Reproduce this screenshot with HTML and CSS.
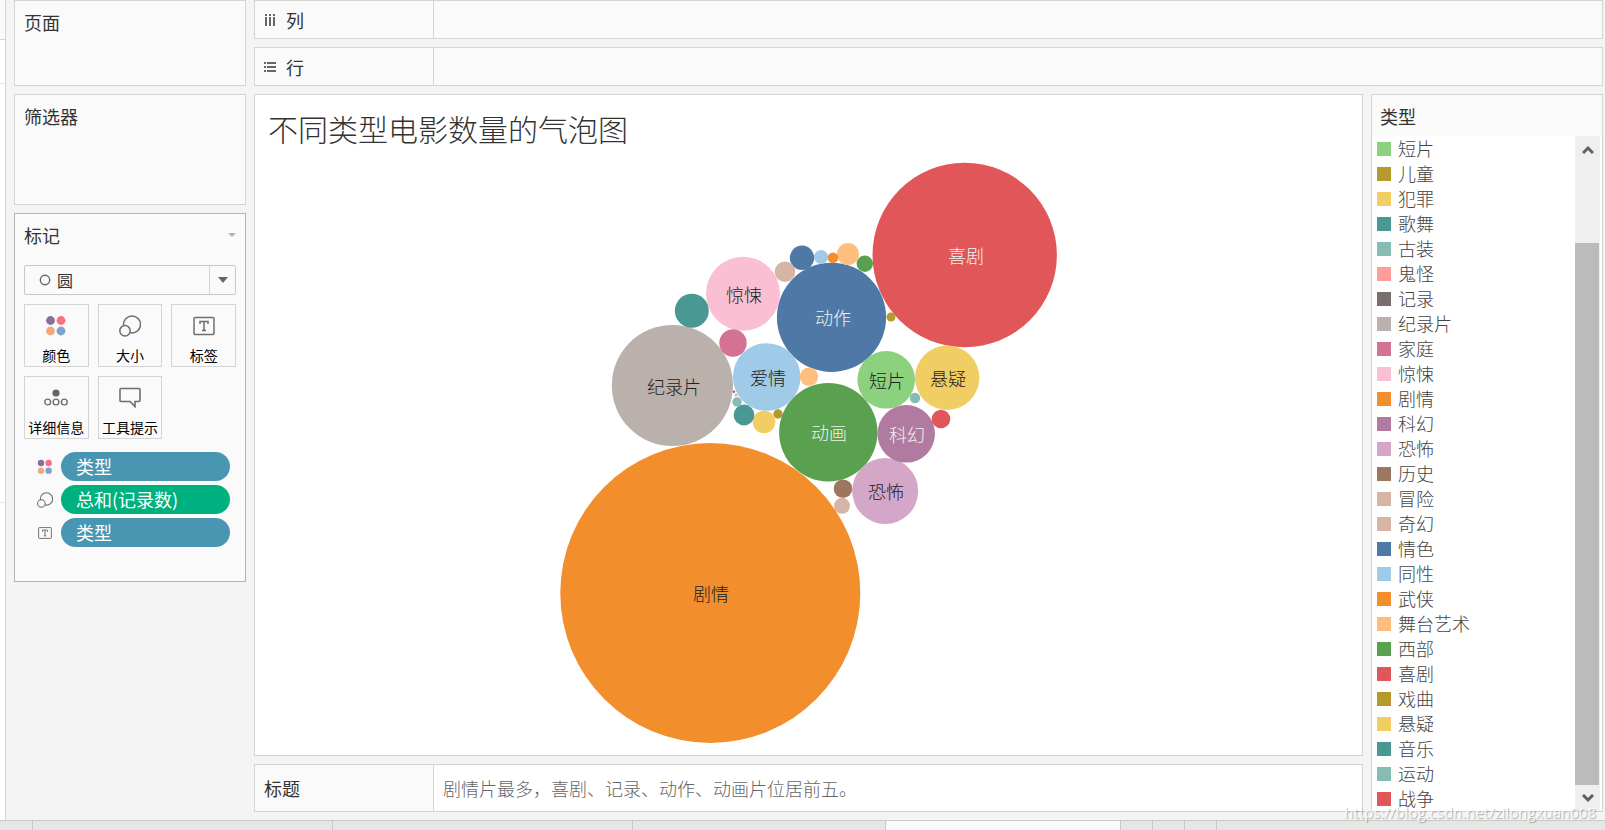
FILE: index.html
```html
<!DOCTYPE html>
<html lang="zh-CN">
<head>
    <meta charset="UTF-8">
    <meta name="viewport" content="width=device-width, initial-scale=1.0">
    <title>不同类型电影数量的气泡图</title>
    <link rel="stylesheet" href="styles.css">
</head>
<body>
    <svg class="defs" width="0" height="0">
        <symbol id="icon-color" viewBox="0 0 22 22">
            <circle cx="5.5" cy="5.5" r="4.4" fill="#86719a"/>
            <circle cx="16" cy="5.5" r="4.4" fill="#fb7080"/>
            <circle cx="5.5" cy="16" r="4.4" fill="#f3a77c"/>
            <circle cx="16" cy="16" r="4.4" fill="#7fa3cd"/>
        </symbol>
        <symbol id="icon-size" viewBox="0 0 22 22">
            <circle cx="13" cy="9.5" r="8.5" fill="none" stroke="#6e6e6e" stroke-width="1.5"/>
            <circle cx="6" cy="15.8" r="5.2" fill="#fafafa" stroke="#6e6e6e" stroke-width="1.5"/>
        </symbol>
        <symbol id="icon-label" viewBox="0 0 22 22">
            <rect x="1" y="2.5" width="20" height="17" rx="1" fill="none" stroke="#6e6e6e" stroke-width="1.5"/>
            <path d="M7 9V6.5h8V9M11 6.5v9M9 15.5h4" fill="none" stroke="#6e6e6e" stroke-width="1.5"/>
        </symbol>
    </svg>

    <div class="workspace">
        <div class="data-edge">
            <div class="edge-top"></div>
            <div class="edge-dims"></div>
            <div class="edge-measures"></div>
        </div>

        <aside class="sidebar">
            <section class="card pages"><h2>页面</h2></section>
            <section class="card filters"><h2>筛选器</h2></section>
            <section class="card marks">
                <div class="marks-head">
                    <h2>标记</h2>
                    <svg width="8" height="4"><path d="M0 0h8l-4 4z" fill="#b4b4b4"/></svg>
                </div>
                <div class="mark-type">
                    <svg class="type-icon" width="12" height="12"><circle cx="6" cy="6" r="4.7" fill="none" stroke="#666" stroke-width="1.4"/></svg>
                    <select aria-label="标记类型"><option>圆</option></select>
                    <span class="type-arrow"><svg width="10" height="6"><path d="M0 0h10l-5 6z" fill="#666"/></svg></span>
                </div>
                <div class="mark-buttons">
                    <button type="button"><svg width="22" height="22"><use href="#icon-color"/></svg>颜色</button>
                    <button type="button"><svg width="22" height="22"><use href="#icon-size"/></svg>大小</button>
                    <button type="button"><svg width="22" height="22"><use href="#icon-label"/></svg>标签</button>
                    <button type="button">
                        <svg width="24" height="22" fill="none" stroke="#6e6e6e" stroke-width="1.4">
                            <circle cx="12" cy="6" r="3.6" fill="#666" stroke="none"/>
                            <circle cx="3.7" cy="15" r="2.9"/><circle cx="12" cy="15" r="2.9"/><circle cx="20.3" cy="15" r="2.9"/>
                        </svg>详细信息</button>
                    <button type="button">
                        <svg width="22" height="22" fill="none" stroke="#6e6e6e" stroke-width="1.6">
                            <path d="M2 1.5h18q1 0 1 1v11q0 1-1 1h-4v5l-5-5H2q-1 0-1-1v-11q0-1 1-1z"/>
                        </svg>工具提示</button>
                </div>
                <ul class="pills">
                    <li><svg width="16" height="16"><use href="#icon-color"/></svg><span class="pill">类型</span></li>
                    <li><svg width="16" height="16"><use href="#icon-size"/></svg><span class="pill measure">总和(记录数)</span></li>
                    <li><svg width="14" height="14"><use href="#icon-label"/></svg><span class="pill">类型</span></li>
                </ul>
            </section>
        </aside>

        <main class="content">
            <div class="shelf">
                <div class="shelf-name">
                    <svg width="12" height="12" fill="#666"><path d="M1 0h2v2H1zM5 0h2v2H5zM9 0h2v2H9zM1 3h2v9H1zM5 3h2v9H5zM9 3h2v9H9z"/></svg>列
                </div>
            </div>
            <div class="shelf">
                <div class="shelf-name">
                    <svg width="12" height="12" fill="#666"><path d="M0 1h2v2H0zM0 5h2v2H0zM0 9h2v2H0zM3 1h9v2H3zM3 5h9v2H3zM3 9h9v2H3z"/></svg>行
                </div>
            </div>

            <div class="sheet">
                <div class="sheet-main">
                    <section class="view">
                        <h1>不同类型电影数量的气泡图</h1>
                        <svg class="bubbles" viewBox="255 155 1107 600">
                            <circle cx="710.3" cy="593" r="150" fill="#f28e2b"/>
                            <circle cx="964.7" cy="255" r="92.2" fill="#e15759"/>
                            <circle cx="672.4" cy="385.5" r="60.6" fill="#bab0ac"/>
                            <circle cx="831.5" cy="317.3" r="54.6" fill="#4e79a7"/>
                            <circle cx="828.3" cy="432.3" r="49.2" fill="#59a14f"/>
                            <circle cx="743" cy="293.7" r="37" fill="#fabfd2"/>
                            <circle cx="766.7" cy="377" r="33.8" fill="#a0cbe8"/>
                            <circle cx="885.2" cy="491" r="33" fill="#d4a6c8"/>
                            <circle cx="947.2" cy="377.8" r="32.2" fill="#f1ce63"/>
                            <circle cx="886.2" cy="379.8" r="28.8" fill="#8cd17d"/>
                            <circle cx="906.2" cy="433.8" r="28.8" fill="#b07aa1"/>
                            <circle cx="691.8" cy="310.8" r="17" fill="#499894"/>
                            <circle cx="733" cy="343" r="13.7" fill="#d37295"/>
                            <circle cx="802" cy="257.8" r="12.2" fill="#4e79a7"/>
                            <circle cx="764" cy="422" r="11.3" fill="#f1ce63"/>
                            <circle cx="848" cy="254" r="11" fill="#ffbe7d"/>
                            <circle cx="744" cy="415" r="10.4" fill="#499894"/>
                            <circle cx="785" cy="271.7" r="10.3" fill="#d7b5a6"/>
                            <circle cx="941" cy="419" r="9.3" fill="#e15759"/>
                            <circle cx="843" cy="488.7" r="9.3" fill="#9d7660"/>
                            <circle cx="809" cy="376.8" r="9.2" fill="#ffbe7d"/>
                            <circle cx="864.8" cy="263.8" r="8.2" fill="#59a14f"/>
                            <circle cx="842" cy="505.8" r="8" fill="#d7b5a6"/>
                            <circle cx="821" cy="257" r="7" fill="#a0cbe8"/>
                            <circle cx="833" cy="257.8" r="5.3" fill="#f28e2b"/>
                            <circle cx="915" cy="398" r="5.2" fill="#86bcb6"/>
                            <circle cx="737" cy="402" r="4.7" fill="#86bcb6"/>
                            <circle cx="778" cy="414" r="4.7" fill="#b6992d"/>
                            <circle cx="891" cy="317" r="4.5" fill="#b6992d"/>
                            <circle cx="736" cy="395" r="1.5" fill="#ff9d9a"/>
                            <circle cx="734" cy="391.7" r="1.2" fill="#79706e"/>
                            <text x="711" y="601">剧情</text>
                            <text class="light" x="966" y="263">喜剧</text>
                            <text x="674" y="394">纪录片</text>
                            <text class="light" x="833" y="325">动作</text>
                            <text class="light" x="829" y="440">动画</text>
                            <text x="744" y="302">惊悚</text>
                            <text x="768" y="385">爱情</text>
                            <text x="886" y="499">恐怖</text>
                            <text x="948" y="386">悬疑</text>
                            <text x="887" y="388">短片</text>
                            <text class="light" x="907" y="442">科幻</text>
                        </svg>
                    </section>
                    <section class="caption">
                        <h2>标题</h2>
                        <p>剧情片最多，喜剧、记录、动作、动画片位居前五。</p>
                    </section>
                </div>

                <section class="legend">
                    <h2>类型</h2>
                    <div class="legend-body">
                        <ul>
                            <li><i class="c-green-light"></i>短片</li>
                            <li><i class="c-olive"></i>儿童</li>
                            <li><i class="c-yellow"></i>犯罪</li>
                            <li><i class="c-teal"></i>歌舞</li>
                            <li><i class="c-teal-light"></i>古装</li>
                            <li><i class="c-red-light"></i>鬼怪</li>
                            <li><i class="c-gray"></i>记录</li>
                            <li><i class="c-gray-light"></i>纪录片</li>
                            <li><i class="c-pink"></i>家庭</li>
                            <li><i class="c-pink-light"></i>惊悚</li>
                            <li><i class="c-orange"></i>剧情</li>
                            <li><i class="c-purple"></i>科幻</li>
                            <li><i class="c-purple-light"></i>恐怖</li>
                            <li><i class="c-brown"></i>历史</li>
                            <li><i class="c-brown-light"></i>冒险</li>
                            <li><i class="c-brown-light"></i>奇幻</li>
                            <li><i class="c-blue"></i>情色</li>
                            <li><i class="c-blue-light"></i>同性</li>
                            <li><i class="c-orange"></i>武侠</li>
                            <li><i class="c-orange-light"></i>舞台艺术</li>
                            <li><i class="c-green"></i>西部</li>
                            <li><i class="c-red"></i>喜剧</li>
                            <li><i class="c-olive"></i>戏曲</li>
                            <li><i class="c-yellow"></i>悬疑</li>
                            <li><i class="c-teal"></i>音乐</li>
                            <li><i class="c-teal-light"></i>运动</li>
                            <li><i class="c-red"></i>战争</li>
                        </ul>
                        <div class="scrollbar">
                            <button type="button" aria-label="向上滚动"><svg width="12" height="9"><path d="M1 8l5-5 5 5" fill="none" stroke="#606060" stroke-width="3"/></svg></button>
                            <div class="track"><div class="thumb"></div></div>
                            <button type="button" aria-label="向下滚动"><svg width="12" height="9"><path d="M1 1l5 5 5-5" fill="none" stroke="#606060" stroke-width="3"/></svg></button>
                        </div>
                    </div>
                </section>
            </div>
        </main>
    </div>

    <footer class="tabs">
        <div class="tab stub"></div>
        <div class="tab wide"></div>
        <div class="tab wide"></div>
        <div class="tab medium"></div>
        <div class="tab active"></div>
        <div class="tab small"></div>
        <div class="tab small"></div>
        <div class="tab small"></div>
    </footer>
    <div class="watermark">https://blog.csdn.net/zilongxuan008</div>
</body>
</html>
```
FILE: styles.css
```css
* {
    box-sizing: border-box;
}
body {
    display: flex;
    flex-direction: column;
    position: relative;
    height: 100vh;
    margin: 0;
    overflow: hidden;
    background: #f4f4f4;
    color: #333;
    font-family: "Noto Sans CJK SC", sans-serif;
    font-size: 18px;
    font-weight: 300;
}
h1, h2, p, ul {
    margin: 0;
    padding: 0;
    font-weight: inherit;
}
h2 {
    font-size: 18px;
    font-weight: 400;
    line-height: 24px;
}
ul {
    list-style: none;
}
svg {
    display: block;
    flex-shrink: 0;
}
button {
    padding: 0;
    font-family: inherit;
    font-weight: inherit;
}
.defs {
    position: absolute;
}
.workspace {
    display: flex;
    flex: 1;
    min-height: 0;
}

/* edge of the data pane */
.data-edge {
    display: flex;
    flex-direction: column;
    width: 6px;
    margin-right: 8px;
    border-right: 1px solid #d4d4d4;
    background: #fff;
}
.edge-top {
    height: 40px;
    background: #fafafa;
    border-bottom: 1px solid #d4d4d4;
}
.edge-dims {
    height: 44px;
    border-bottom: 1px solid #e6e6e6;
}
.edge-measures {
    height: 419px;
    border-bottom: 1px solid #e6e6e6;
}

/* left cards */
.sidebar {
    display: flex;
    flex-direction: column;
    gap: 8px;
    width: 232px;
    margin-right: 8px;
}
.card {
    padding: 9px;
    border: 1px solid #d4d4d4;
    background: #fafafa;
}
.pages {
    height: 86px;
}
.filters {
    height: 111px;
}
.marks {
    padding-bottom: 34px;
    border-color: #b4b4b4;
}
.marks-head {
    display: flex;
    justify-content: space-between;
    align-items: center;
    margin-bottom: 18px;
}
.mark-type {
    position: relative;
    margin-bottom: 9px;
}
.mark-type select {
    display: block;
    width: 100%;
    height: 30px;
    padding: 0 32px;
    appearance: none;
    border: 1px solid #c8c8c8;
    border-radius: 2px;
    background: #fafafa;
    color: #333;
    font-family: inherit;
    font-size: 16px;
    font-weight: 400;
}
.type-icon {
    position: absolute;
    left: 15px;
    top: 9px;
}
.type-arrow {
    position: absolute;
    top: 1px;
    right: 1px;
    bottom: 1px;
    display: flex;
    align-items: center;
    justify-content: center;
    width: 26px;
    border-left: 1px solid #d4d4d4;
    pointer-events: none;
}
.mark-buttons {
    display: grid;
    grid-template-columns: repeat(3, 1fr);
    gap: 9px;
    margin-bottom: 13px;
}
.mark-buttons button {
    display: flex;
    flex-direction: column;
    align-items: center;
    gap: 8px;
    height: 63px;
    padding-top: 10px;
    border: 1px solid #d4d4d4;
    background: #fafafa;
    color: #000;
    font-size: 14px;
    font-weight: 400;
    line-height: 20px;
    white-space: nowrap;
}
.pills {
    display: flex;
    flex-direction: column;
    gap: 4px;
    padding: 0 6px 0 13px;
}
.pills li {
    display: grid;
    grid-template-columns: 16px 1fr;
    gap: 8px;
    align-items: center;
    justify-items: center;
}
.pill {
    width: 100%;
    height: 29px;
    padding-left: 15px;
    border-radius: 15px;
    background: #4996b2;
    color: #fff;
    font-weight: 400;
    line-height: 28px;
}
.pill.measure {
    background: #00b180;
}

/* shelves */
.content {
    display: flex;
    flex: 1;
    flex-direction: column;
    gap: 8px;
    min-width: 0;
    margin-right: 2px;
}
.shelf {
    display: flex;
    height: 39px;
    border: 1px solid #d4d4d4;
    background: #fafafa;
}
.shelf-name {
    display: flex;
    align-items: center;
    gap: 10px;
    width: 179px;
    padding-left: 9px;
    border-right: 1px solid #d4d4d4;
    font-weight: 400;
}

/* sheet */
.sheet {
    display: flex;
    gap: 8px;
    align-items: stretch;
}
.sheet-main {
    display: flex;
    flex: 1;
    flex-direction: column;
    gap: 8px;
    min-width: 0;
}
.view {
    border: 1px solid #d4d4d4;
    background: #fff;
}
.view h1 {
    height: 60px;
    padding: 13px 13px 0;
    font-size: 30px;
    line-height: 40px;
}
.bubbles {
    width: 100%;
}
.bubbles text {
    fill: #222;
    font-size: 18px;
    text-anchor: middle;
}
.bubbles .light {
    fill: #f0f0f0;
}
.caption {
    display: flex;
    height: 48px;
    border: 1px solid #d4d4d4;
    background: #fff;
    line-height: 46px;
}
.caption h2 {
    width: 179px;
    padding-left: 9px;
    border-right: 1px solid #d4d4d4;
    background: #fafafa;
    line-height: 46px;
}
.caption p {
    padding-left: 9px;
    color: #666;
}

/* colour legend */
.legend {
    width: 232px;
    border: 1px solid #d4d4d4;
    background: #fafafa;
}
.legend h2 {
    height: 41px;
    padding: 9px 8px;
}
.legend-body {
    display: flex;
    justify-content: space-between;
    padding-right: 2px;
    background: #fff;
}
.legend li {
    display: flex;
    align-items: center;
    gap: 7px;
    height: 25px;
    padding-left: 5px;
    color: #444;
    line-height: 25px;
}
.legend i {
    width: 14px;
    height: 14px;
}
.scrollbar {
    display: flex;
    flex-direction: column;
    width: 25px;
    background: #efefef;
}
.scrollbar button {
    display: flex;
    align-items: center;
    justify-content: center;
    height: 26px;
    border: 0;
    background: #efefef;
}
.track {
    display: flex;
    flex: 1;
    flex-direction: column;
    justify-content: flex-end;
}
.thumb {
    width: 24px;
    height: 87%;
    background: #bbb;
}
.c-blue { background: #4e79a7; }
.c-blue-light { background: #a0cbe8; }
.c-orange { background: #f28e2b; }
.c-orange-light { background: #ffbe7d; }
.c-green { background: #59a14f; }
.c-green-light { background: #8cd17d; }
.c-olive { background: #b6992d; }
.c-yellow { background: #f1ce63; }
.c-teal { background: #499894; }
.c-teal-light { background: #86bcb6; }
.c-red { background: #e15759; }
.c-red-light { background: #ff9d9a; }
.c-gray { background: #79706e; }
.c-gray-light { background: #bab0ac; }
.c-pink { background: #d37295; }
.c-pink-light { background: #fabfd2; }
.c-purple { background: #b07aa1; }
.c-purple-light { background: #d4a6c8; }
.c-brown { background: #9d7660; }
.c-brown-light { background: #d7b5a6; }

/* sheet tabs */
.tabs {
    display: flex;
    height: 10px;
    border-top: 1px solid #c8c8c8;
    background: #e6e6e6;
}
.tab {
    border-right: 1px solid #c8c8c8;
}
.tab.stub {
    width: 33px;
}
.tab.wide {
    width: 300px;
}
.tab.medium {
    width: 253px;
}
.tab.active {
    width: 235px;
    background: #fafafa;
}
.tab.small {
    width: 32px;
}
.watermark {
    position: absolute;
    right: 9px;
    bottom: 8px;
    color: rgba(255, 255, 255, 0.8);
    font-family: "Open Sans", sans-serif;
    font-size: 15px;
    font-weight: 400;
    line-height: 20px;
    text-shadow: 1px 1px 1px rgba(0, 0, 0, 0.3);
}
```
